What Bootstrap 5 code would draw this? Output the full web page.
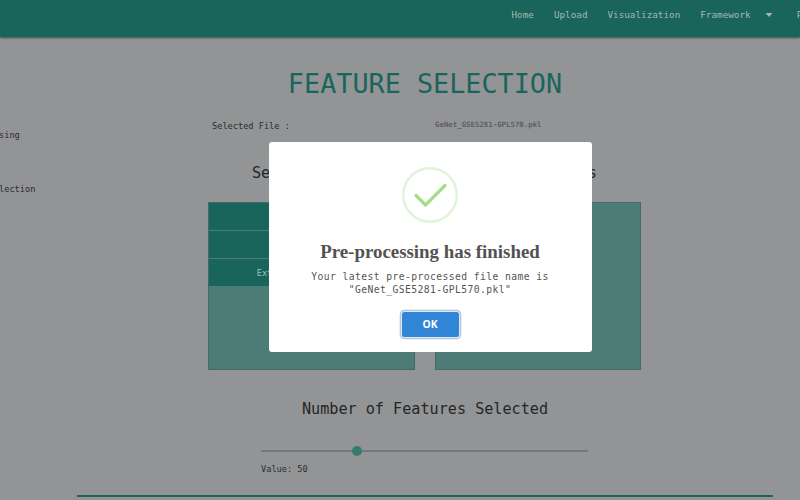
<!DOCTYPE html>
<html lang="en">
<head>
<meta charset="utf-8">
<meta name="viewport" content="width=device-width, initial-scale=1">
<title>Feature Selection</title>
<link href="https://cdn.jsdelivr.net/npm/bootstrap@5.3.0/dist/css/bootstrap.min.css" rel="stylesheet">
<style>
body{width:800px;height:500px;overflow:hidden;background:#939496;color:#2b2d2f;font-family:"DejaVu Sans Mono",monospace;font-size:8.65px;line-height:12px}
.topbar{height:37px;background:#19655c;box-shadow:0 1px 2px rgba(0,0,0,.5);padding:0 0 7px 511.5px;font-size:9.3px;--bs-navbar-nav-link-padding-x:0}
.topbar .nav-link{color:#a3b7b5;padding:0;white-space:nowrap;line-height:14px}
.topbar .navbar-nav{gap:20px}
.topbar svg{margin-left:14px}
.shell{height:463px}
.side{width:77px;padding-top:92px}
.side a{color:#2b2d2f;text-decoration:none;height:54px;margin-left:-1px}
.main{width:696px;height:460px;border-bottom:2px solid #19655c}
.page-title{font-size:26.8px;line-height:32px;color:#19655c;margin:31px 0 0}
.file-row{width:433px;margin:19px 0 0 131px}
.file-row>*{flex:0 0 50%}
.file-row>:first-child{padding-left:4px;padding-top:1px}
.file-row>:last-child{font-size:7.38px;color:#5d5f61;padding-left:10.5px}
.pickers{gap:20px;width:433px;margin:31px 0 0 131px}
.sub{font-size:15.15px;line-height:20px;margin:0;color:#242628}
.box{height:168px;margin-top:19px;border:1px solid #426b67;background:#4d7b76}
.choice{height:26.7px;margin-bottom:1.5px;background:#19655c;color:#a9bcba;font-weight:500}
.amount{margin-top:29px;padding-left:0}
.slider{width:327px;height:10px;margin:27px 0 0 184px}
.track{height:2px;background:#75797c}
.thumb{width:10px;height:10px;background:#387a70;top:0;margin-left:-5px}
.value{margin:7px 0 0 184px}
.dialog-box{width:323px;height:210px;left:268.5px;top:142px;background:#fff;border-radius:3px;padding-top:25px;color:#545454}
.dialog-box h2{font:700 18.9px/24px "Liberation Serif",serif;margin:17px 0 0;color:#525252}
.dialog-box p{font-size:9.7px;letter-spacing:.42px;line-height:13px;margin:6px 0 0}
.ok{width:57px;height:25px;margin-top:16px;padding:0;border:0;border-radius:2.5px;background:#3085d6;color:#fff;font:700 10.3px/25px "Open Sans",sans-serif;box-shadow:0 0 0 1px #d9e9f6,0 0 0 2.3px #b3c7d9}
.ok:hover{background:#2b7bc8;color:#fff}
</style>
</head>
<body>
<nav class="topbar navbar navbar-expand position-relative flex-nowrap">
  <div class="navbar-nav flex-nowrap">
    <a class="nav-link" href="#">Home</a>
    <a class="nav-link" href="#">Upload</a>
    <a class="nav-link" href="#">Visualization</a>
    <a class="nav-link d-flex align-items-center" href="#">Framework<svg width="8" height="4" viewBox="0 0 8 4" fill="currentColor"><path d="M.5 0h7L4 4z"/></svg></a>
    <a class="nav-link ms-1" href="#">P</a>
  </div>
</nav>
<div class="shell d-flex">
  <aside class="side d-flex flex-column">
    <a href="#">sing</a>
    <a href="#">lection</a>
  </aside>
  <main class="main">
    <h1 class="page-title text-center fw-normal">FEATURE SELECTION</h1>
    <div class="file-row d-flex">
      <span>Selected File :</span>
      <strong>GeNet_GSE5281-GPL570.pkl</strong>
    </div>
    <div class="pickers d-flex">
      <section class="flex-fill w-50 text-center">
        <h2 class="sub fw-normal">Select Method</h2>
        <div class="box">
          <div class="choice d-flex align-items-center justify-content-center">PCA</div>
          <div class="choice d-flex align-items-center justify-content-center">SVM</div>
          <div class="choice d-flex align-items-center justify-content-center">Extra Tree Classifier</div>
        </div>
      </section>
      <section class="flex-fill w-50 text-center">
        <h2 class="sub fw-normal">Your Features</h2>
        <div class="box"></div>
      </section>
    </div>
    <h2 class="sub amount fw-normal text-center">Number of Features Selected</h2>
    <div class="slider position-relative d-flex align-items-center">
      <div class="track w-100"></div>
      <div class="thumb rounded-circle position-absolute" style="left:29.3%"></div>
    </div>
    <div class="value">Value: 50</div>
  </main>
</div>
<div class="dialog-box position-absolute d-flex flex-column align-items-center text-center" role="dialog">
  <svg class="flex-shrink-0" width="56" height="56" viewBox="0 0 56 56" fill="none">
    <circle cx="28" cy="28" r="26.8" stroke="#e1f3d8" stroke-width="2.4"/>
    <path d="M14 28.5 23.5 38 43 18.5" stroke="#a5dc86" stroke-width="3.2" stroke-linecap="round"/>
  </svg>
  <h2>Pre-processing has finished</h2>
  <p>Your latest pre-processed file name is<br>"GeNet_GSE5281-GPL570.pkl"</p>
  <button class="ok btn" type="button">OK</button>
</div>
<script src="https://cdn.jsdelivr.net/npm/bootstrap@5.3.0/dist/js/bootstrap.bundle.min.js"></script>
</body>
</html>
